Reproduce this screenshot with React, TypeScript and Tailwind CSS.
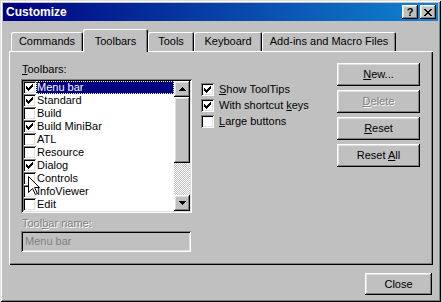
import React from "react";

// Win98 style bevels
const raised =
  "shadow-[inset_-1px_-1px_#000,inset_1px_1px_#fff,inset_-2px_-2px_#808080,inset_2px_2px_#dfdfdf]";
const sunken =
  "shadow-[inset_1px_1px_#808080,inset_-1px_-1px_#fff,inset_2px_2px_#000,inset_-2px_-2px_#dfdfdf]";
const engraved = "text-[#808080] [text-shadow:1px_1px_0_#fff]";

const CHECK = [
  "......#",
  ".....##",
  "#...###",
  "##.###.",
  "#####..",
  ".###...",
  "..#....",
];
const UP = ["...#...", "..###..", ".#####.", "#######"];
const DOWN = ["#######", ".#####.", "..###..", "...#..."];
const CLOSE_X = [
  "##....##",
  ".##..##.",
  "..####..",
  "...##...",
  "..####..",
  ".##..##.",
  "##....##",
];

function Pixels({ rows, color = "#000" }: { rows: string[]; color?: string }) {
  const w = rows[0].length;
  const h = rows.length;
  return (
    <svg
      width={w}
      height={h}
      viewBox={`0 0 ${w} ${h}`}
      shapeRendering="crispEdges"
      className="block"
    >
      {rows.flatMap((r, y) =>
        r
          .split("")
          .map((c, x) =>
            c === "#" ? (
              <rect key={`${x}-${y}`} x={x} y={y} width={1} height={1} fill={color} />
            ) : null
          )
      )}
    </svg>
  );
}

function Check({ checked }: { checked: boolean }) {
  return (
    <div
      className={`w-[13px] h-[13px] shrink-0 bg-white flex items-center justify-center ${sunken}`}
    >
      {checked && <Pixels rows={CHECK} />}
    </div>
  );
}

function Btn({
  children,
  size = "h-[23px] w-[83px]",
}: {
  children: React.ReactNode;
  size?: string;
}) {
  return (
    <div
      className={`${size} flex items-center justify-center bg-[#c0c0c0] ${raised}`}
    >
      {children}
    </div>
  );
}

const TOOLBARS: { name: string; on: boolean }[] = [
  { name: "Menu bar", on: true },
  { name: "Standard", on: true },
  { name: "Build", on: false },
  { name: "Build MiniBar", on: true },
  { name: "ATL", on: false },
  { name: "Resource", on: false },
  { name: "Dialog", on: true },
  { name: "Controls", on: false },
  { name: "InfoViewer", on: false },
  { name: "Edit", on: false },
];

const TABS = [
  { label: "Commands", w: "w-[72px]" },
  { label: "Toolbars", w: "w-[65px]", active: true },
  { label: "Tools", w: "w-[46px]" },
  { label: "Keyboard", w: "w-[68px]" },
  { label: "Add-ins and Macro Files", w: "w-[134px]" },
];

export default function App() {
  return (
    <div className="w-[441px] h-[302px] bg-[#c0c0c0] p-[3px] flex flex-col text-[11px] text-black font-['Liberation_Sans',Arial,sans-serif] shadow-[inset_1px_1px_#dfdfdf,inset_-1px_-1px_#000,inset_2px_2px_#fff,inset_-2px_-2px_#808080]">
      {/* Title bar */}
      <div className="h-[18px] flex items-center pl-[3px] pr-[2px] bg-[linear-gradient(to_right,#000080,#1084d0)]">
        <span className="flex-1 text-white font-bold text-[12px] leading-[18px]">
          Customize
        </span>
        <div className="flex gap-[2px]">
          <div
            className={`w-[16px] h-[14px] bg-[#c0c0c0] flex items-center justify-center font-bold text-[11px] leading-none ${raised}`}
          >
            ?
          </div>
          <div
            className={`w-[16px] h-[14px] bg-[#c0c0c0] flex items-center justify-center ${raised}`}
          >
            <Pixels rows={CLOSE_X} />
          </div>
        </div>
      </div>

      <div className="flex flex-col pl-[6px] pr-[5px] pt-[8px]">
        {/* Tabs */}
        <div className="flex items-end h-[22px] pl-[2px]">
          {TABS.map((t) =>
            t.active ? (
              <div
                key={t.label}
                className={`${t.w} relative z-10 h-[23px] -mb-px pt-[3px] leading-[19px] text-center bg-[#c0c0c0] rounded-t-[2px] shadow-[inset_1px_1px_#fff,inset_-1px_0_#000,inset_-2px_0_#808080]`}
              >
                {t.label}
              </div>
            ) : (
              <div
                key={t.label}
                className={`${t.w} h-[19px] leading-[19px] text-center rounded-t-[2px] shadow-[inset_1px_1px_#fff,inset_-1px_0_#000,inset_-2px_0_#808080]`}
              >
                {t.label}
              </div>
            )
          )}
        </div>

        {/* Panel */}
        <div className="h-[214px] flex pl-[12px] pr-[13px] pt-[11px] shadow-[inset_1px_1px_#fff,inset_-1px_-1px_#000,inset_-2px_-2px_#808080]">
          {/* Left column */}
          <div className="w-[171px] flex flex-col">
            <div className="h-[15px] leading-[15px] pl-[1px]">
              <span className="underline">T</span>oolbars:
            </div>
            <div className={`relative mt-[2px] h-[134px] bg-white p-[2px] flex ${sunken}`}>
              <div className="w-[151px] flex flex-col overflow-hidden">
                {TOOLBARS.map((t, i) => (
                  <div key={t.name} className="h-[13px] flex shrink-0">
                    <Check checked={t.on} />
                    <span
                      className={`flex-1 pl-[1px] leading-[13px] whitespace-nowrap ${
                        i === 0
                          ? "bg-[#000080] text-white outline-1 outline-dotted outline-[#ffffc0] -outline-offset-1"
                          : ""
                      }`}
                    >
                      {t.name}
                    </span>
                  </div>
                ))}
              </div>
              {/* Scrollbar */}
              <div className="w-[16px] flex flex-col">
                <div
                  className={`h-[16px] bg-[#c0c0c0] flex items-center justify-center ${raised}`}
                >
                  <Pixels rows={UP} />
                </div>
                <div className={`h-[66px] bg-[#c0c0c0] ${raised}`} />
                <div className="flex-1 bg-[conic-gradient(#fff_25%,#c0c0c0_0_50%,#fff_0_75%,#c0c0c0_0)] bg-[length:2px_2px]" />
                <div
                  className={`h-[16px] bg-[#c0c0c0] flex items-center justify-center ${raised}`}
                >
                  <Pixels rows={DOWN} />
                </div>
              </div>
              {/* Mouse pointer */}
              <svg
                width="13"
                height="20"
                viewBox="0 0 13 20"
                className="absolute left-[7px] top-[97px]"
              >
                <path
                  d="M0.5 0.5 V16.5 L4.5 12.5 L7.5 18.5 L9.5 17.5 L6.5 11.5 H11.5 Z"
                  fill="#fff"
                  stroke="#000"
                  strokeWidth="1"
                />
              </svg>
            </div>
            <div className={`mt-[3px] h-[15px] leading-[15px] pl-[1px] ${engraved}`}>
              Tool<span className="underline">b</span>ar name:
            </div>
            <div
              className={`w-[170px] h-[21px] pl-[4px] flex items-center text-[#808080] bg-[#c0c0c0] ${sunken}`}
            >
              Menu bar
            </div>
          </div>

          {/* Options */}
          <div className="flex-1 ml-[9px] mt-[20px] flex flex-col">
            {[
              { pre: "", u: "S", post: "how ToolTips", on: true },
              { pre: "With shortcut ", u: "k", post: "eys", on: true },
              { pre: "", u: "L", post: "arge buttons", on: false },
            ].map((o) => (
              <div key={o.post} className="h-[16px] flex items-start gap-[5px]">
                <div className="mt-[1px]">
                  <Check checked={o.on} />
                </div>
                <span className="leading-[15px]">
                  {o.pre}
                  <span className="underline">{o.u}</span>
                  {o.post}
                </span>
              </div>
            ))}
          </div>

          {/* Buttons */}
          <div className="w-[83px] mt-[1px] flex flex-col gap-[4px]">
            <Btn>
              <span>
                <span className="underline">N</span>ew...
              </span>
            </Btn>
            <Btn>
              <span className={engraved}>
                <span className="underline">D</span>elete
              </span>
            </Btn>
            <Btn>
              <span>
                <span className="underline">R</span>eset
              </span>
            </Btn>
            <Btn>
              <span>
                Reset <span className="underline">A</span>ll
              </span>
            </Btn>
          </div>
        </div>

        {/* Footer */}
        <div className="mt-[8px] flex justify-end pr-[1px]">
          <Btn size="w-[67px] h-[22px]">Close</Btn>
        </div>
      </div>
    </div>
  );
}
